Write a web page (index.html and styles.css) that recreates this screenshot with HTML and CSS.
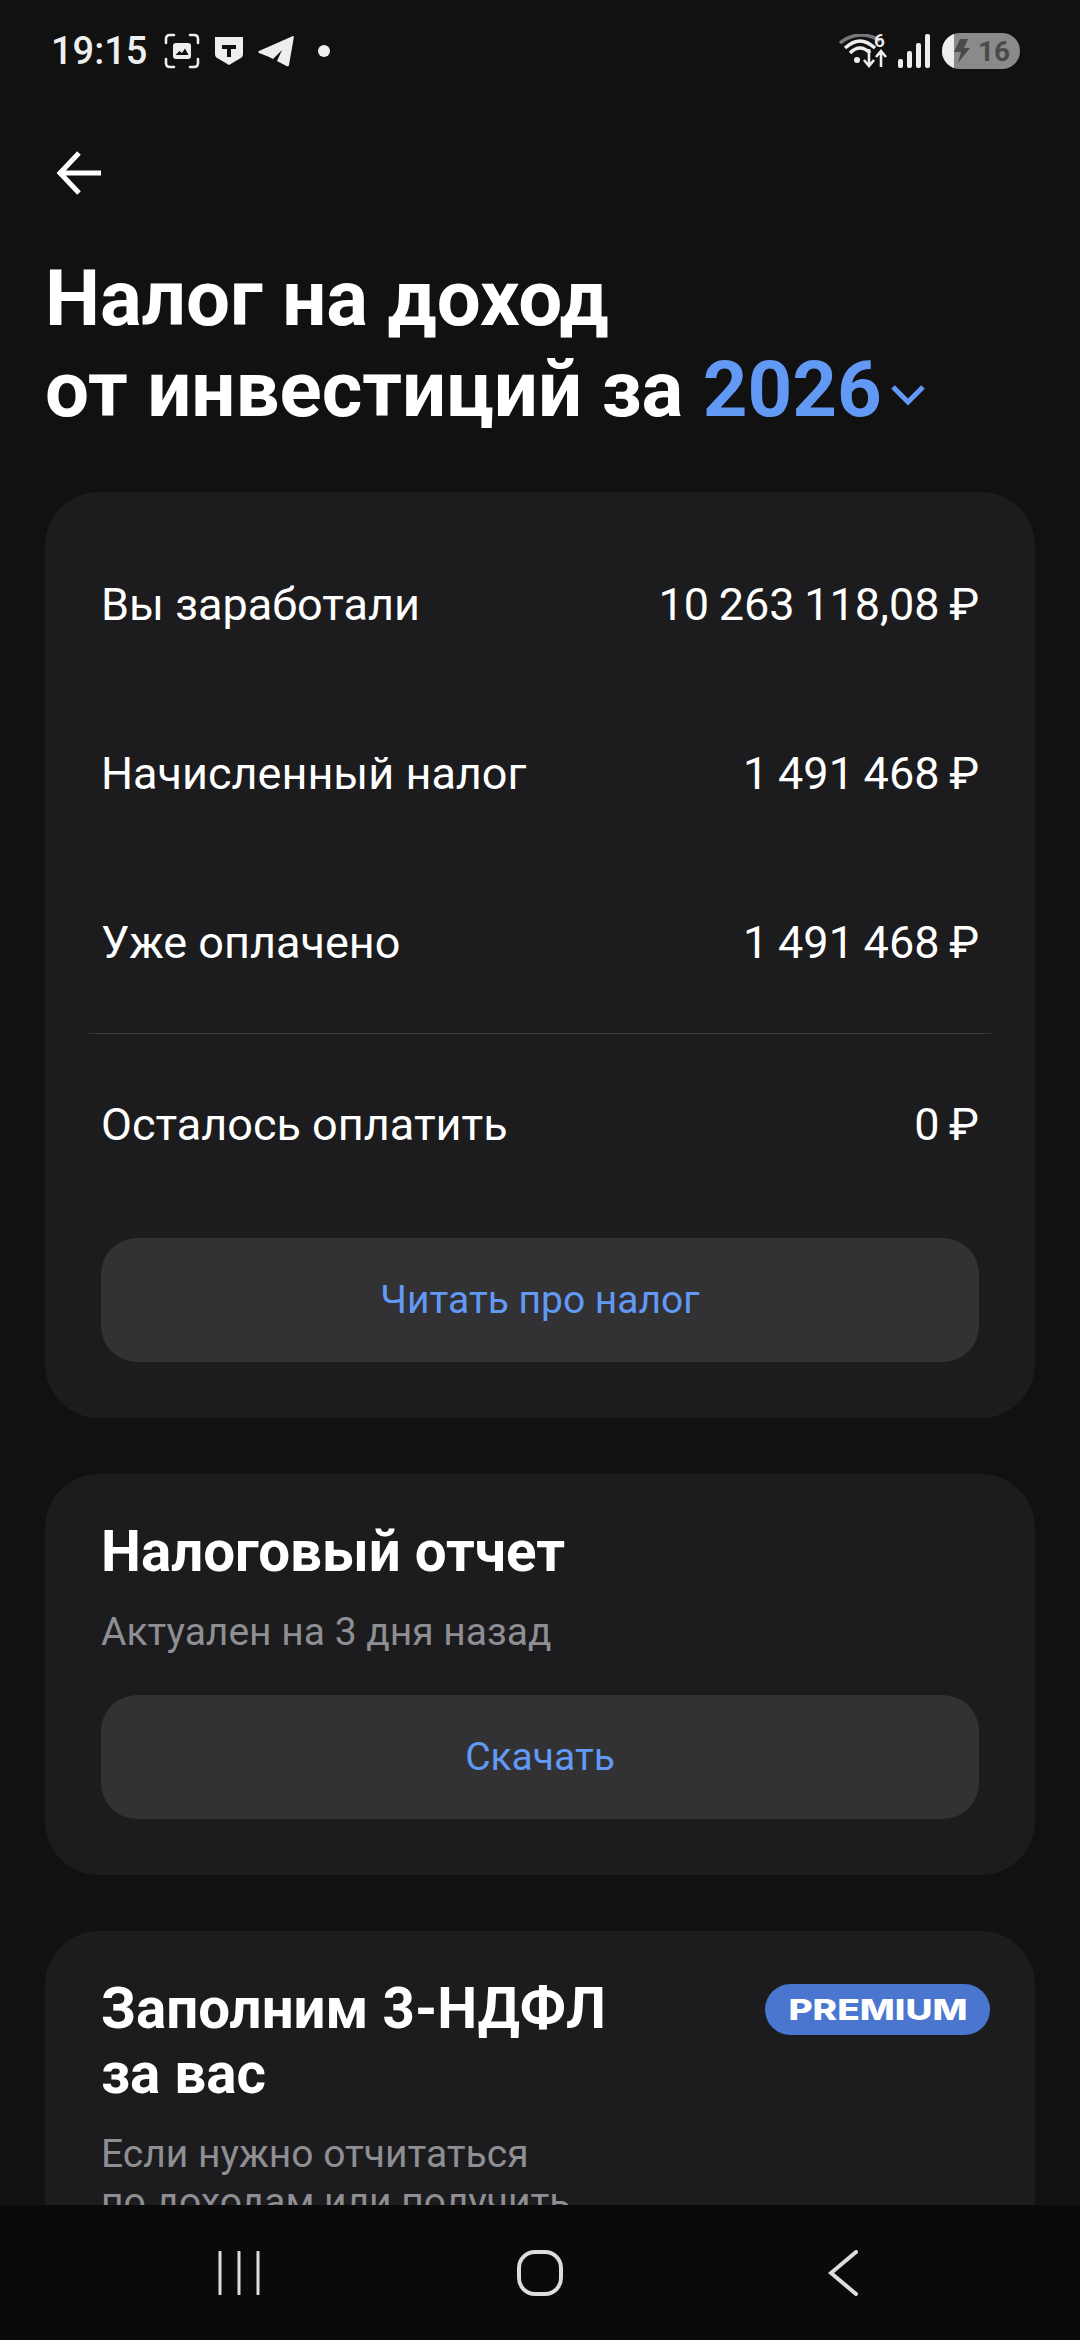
FILE: index.html
```html
<!DOCTYPE html>
<html lang="ru">
<head>
  <meta name="viewport" content="width=device-width, initial-scale=1.0">
  <title>Налог на доход</title>
  <link rel="stylesheet" href="styles.css">
</head>
<body>
  <div class="screen">
    <div class="status-bar">
      <div class="status-left">
        <span class="status-time">19:15</span>
        <svg class="status-icon shot-icon" width="36" height="36" viewBox="0 0 36 36">
          <path d="M2 10V6q0-4 4-4h4M26 2h4q4 0 4 4v4M34 26v4q0 4-4 4h-4M10 34H6q-4 0-4-4v-4" fill="none" stroke="#eee" stroke-width="2.6" stroke-linecap="round"/>
          <rect x="9" y="10" width="18" height="16" rx="3" fill="#eee"/>
          <path d="M11.500 22l4-4 2.500 2 3-4.500 3.500 6.500z" fill="#111"/>
        </svg>
        <svg class="status-icon shield-icon" width="30" height="30" viewBox="0 0 30 30">
          <path d="M1 1h28v17q0 3-3 4.500L15 29 4 22.500Q1 21 1 18z" fill="#eee"/>
          <path d="M8 9h14v4h-5v8h-4v-8H8z" fill="#111"/>
        </svg>
        <svg class="status-icon plane-icon" width="36" height="32" viewBox="0 0 36 32">
          <path d="M35 1q1 0 .8 1.500L31 30q-.3 2-2.500 1L19 26l5-11-9 9-5-2.500L1 18q-1.500-1 0-2z" fill="#eee"/>
        </svg>
        <span class="status-dot"></span>
      </div>
      <div class="status-right">
        <svg width="50" height="34" viewBox="0 0 50 34">
          <path d="M2 9Q12 1 23 1t19 6" fill="none" stroke="#777" stroke-width="3.500"/>
          <path d="M7 14q8-7 15-7t15 7M12 19q5-5 10-5t10 5" fill="none" stroke="#eee" stroke-width="3.500"/>
          <circle cx="19" cy="26" r="3" fill="#eee"/>
          <path d="M31 15v16M26 26l5 6 5-6M43 33V18M38 23l5-6 5 6" fill="none" stroke="#eee" stroke-width="2.600"/>
        </svg>
        <span class="status-six">6</span>
        <svg class="signal" width="32" height="34" viewBox="0 0 32 34">
          <rect x="0" y="25" width="5" height="9" rx="2" fill="#eee"/>
          <rect x="9" y="17" width="5" height="17" rx="2" fill="#eee"/>
          <rect x="18" y="9" width="5" height="25" rx="2" fill="#eee"/>
          <rect x="27" y="0" width="5" height="34" rx="2" fill="#eee"/>
        </svg>
        <div class="battery">
          <span class="battery-fill"></span>
          <svg class="battery-bolt" width="17" height="24" viewBox="0 0 17 24">
            <path d="M7 0h8l-4 9h6L5 24l3-11H1z" fill="#4a4a4a"/>
          </svg>
          <span class="battery-level">16</span>
        </div>
      </div>
    </div>

    <div class="content">
      <div class="back-row">
        <svg width="48" height="48" viewBox="0 0 48 48">
          <path d="M46 24H5M24 4L5 24l19 20" fill="none" stroke="#fff" stroke-width="5"/>
        </svg>
      </div>

      <h1 class="page-title">Налог на доход<br>от инвестиций за <span class="year">2026</span><svg class="year-chevron" width="36" height="22" viewBox="0 0 36 22"><path d="M3 3l15 15L33 3" fill="none" stroke="#6199f5" stroke-width="5"/></svg></h1>

      <section class="card tax-card">
        <div class="row"><span>Вы заработали</span><span class="row-value">10 263 118,08 ₽</span></div>
        <div class="row"><span>Начисленный налог</span><span class="row-value">1 491 468 ₽</span></div>
        <div class="row"><span>Уже оплачено</span><span class="row-value">1 491 468 ₽</span></div>
        <div class="divider"></div>
        <div class="row"><span>Осталось оплатить</span><span class="row-value">0 ₽</span></div>
        <button class="card-button">Читать про налог</button>
      </section>

      <section class="card report-card">
        <h2 class="card-title">Налоговый отчет</h2>
        <p class="card-sub">Актуален на 3 дня назад</p>
        <button class="card-button">Скачать</button>
      </section>

      <section class="card ndfl-card">
        <div class="ndfl-head">
          <h2 class="card-title ndfl-title">Заполним 3-НДФЛ<br>за вас</h2>
          <span class="premium"><span class="premium-text">PREMIUM</span></span>
        </div>
        <p class="card-sub ndfl-text">Если нужно отчитаться<br>по доходам или получить<br>налоговый вычет</p>
      </section>
    </div>

    <div class="nav-bar">
      <svg width="44" height="44" viewBox="0 0 44 44">
        <path d="M3 1v42M22 1v42M41 1v42" fill="none" stroke="#ddd" stroke-width="3" stroke-linecap="round"/>
      </svg>
      <svg width="46" height="46" viewBox="0 0 46 46">
        <rect x="2" y="2" width="42" height="42" rx="16" fill="none" stroke="#ddd" stroke-width="4"/>
      </svg>
      <svg class="nav-back" width="30" height="46" viewBox="0 0 30 46">
        <path d="M28 2L3 23l25 21" fill="none" stroke="#ddd" stroke-width="4" stroke-linecap="round"/>
      </svg>
    </div>
  </div>
</body>
</html>
```
FILE: styles.css
```css
* {
  box-sizing: border-box;
}
html, body {
  margin: 0;
  padding: 0;
}
body {
  width: 1080px;
  height: 2340px;
  overflow: hidden;
  background-color: #111112;
  color: #fff;
  font-family: Roboto, "Noto Sans", sans-serif;
}
.screen {
  display: flex;
  flex-direction: column;
  height: 2340px;
}

/* status bar */
.status-bar {
  display: flex;
  flex: none;
  align-items: center;
  justify-content: space-between;
  height: 102px;
  padding: 0 60px 0 51px;
}
.status-left, .status-right {
  display: flex;
  align-items: center;
}
.status-time {
  width: 113px;
  font-size: 38px;
  font-weight: 500;
  color: #eee;
}
.status-icon {
  margin-right: 14px;
}
.plane-icon {
  margin-right: 0;
}
.status-dot {
  width: 12px;
  height: 12px;
  margin-left: 24px;
  border-radius: 50%;
  background-color: #eee;
}
.status-six {
  font-size: 19px;
  font-weight: 600;
  color: #eee;
  margin: -22px 0 0 -14px;
  width: 14px;
}
.signal {
  margin-left: 10px;
}
.battery {
  position: relative;
  display: flex;
  align-items: center;
  width: 78px;
  height: 36px;
  margin-left: 12px;
  padding-left: 11px;
  border-radius: 18px;
  background-color: #8a8a8a;
  overflow: hidden;
}
.battery-fill {
  position: absolute;
  left: 0;
  top: 0;
  width: 12px;
  height: 36px;
  background-color: #eee;
}
.battery-bolt {
  position: relative;
}
.battery-level {
  margin-left: 8px;
  font-size: 28px;
  font-weight: 700;
  color: #4a4a4a;
}

/* scrolling part */
.content {
  flex: 1;
  min-height: 0;
  overflow: hidden;
  padding: 0 45px;
}
.back-row {
  display: flex;
  height: 48px;
  margin: 47px 0 0 10px;
}
.page-title {
  margin: 56px 0 57px 0;
  font-size: 78px;
  line-height: 91px;
  font-weight: 700;
}
.year {
  color: #6199f5;
}
.year-chevron {
  margin-left: 8px;
  vertical-align: 10px;
}

.card {
  margin-bottom: 56px;
  padding: 0 56px 56px;
  border-radius: 54px;
  background-color: #1c1c1e;
}
.tax-card {
  padding-top: 28px;
}
.row {
  display: flex;
  align-items: center;
  justify-content: space-between;
  height: 169px;
  font-size: 45px;
}
.row-value {
  word-spacing: -1.5px;
}
.divider {
  height: 1px;
  margin: 6px -12px 6px -12px;
  background-color: #3a3a3c;
}
.card-button {
  display: block;
  width: 100%;
  height: 124px;
  margin: 0;
  border: none;
  border-radius: 36px;
  background-color: #323234;
  color: #6199f5;
  font-family: inherit;
  font-size: 39px;
}
.tax-card .card-button {
  margin-top: 29px;
}
.report-card {
  padding-top: 46px;
}
.card-title {
  margin: 0;
  font-size: 56.5px;
  line-height: 64px;
  font-weight: 700;
}
.card-sub {
  margin: 0;
  font-size: 39px;
  line-height: 48px;
  color: #8e8e93;
}
.report-card .card-sub {
  margin: 24px 0 39px;
}
.ndfl-card {
  padding-top: 46px;
}
.ndfl-head {
  display: flex;
  align-items: flex-start;
  justify-content: space-between;
  margin-right: -11px;
}
.ndfl-title {
  line-height: 65px;
}
.premium {
  display: flex;
  align-items: center;
  justify-content: center;
  width: 225px;
  height: 51px;
  margin-top: 7px;
  border-radius: 26px;
  background-color: #4a76d0;
}
.premium-text {
  font-family: Inter, sans-serif;
  font-size: 29px;
  font-weight: 800;
  transform: scaleX(1.28);
}
.ndfl-text {
  margin-top: 23px;
}

/* system navigation */
.nav-bar {
  display: flex;
  flex: none;
  align-items: center;
  gap: 256px;
  height: 135px;
  padding-left: 217px;
  background-color: #0a0a0a;
}
.nav-back {
  margin-left: 9px;
}
```
